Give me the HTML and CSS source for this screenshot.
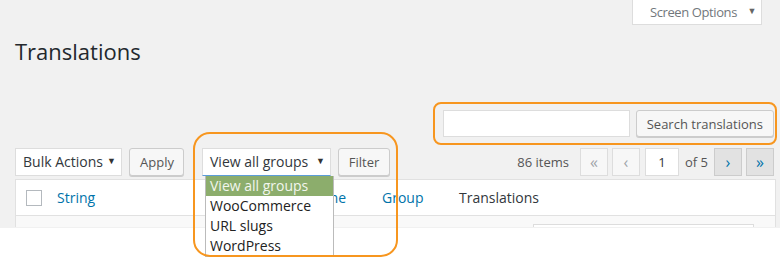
FILE: index.html
```html
<!DOCTYPE html>
<html>
    <head>
        <title>Translations</title>
        <meta charset="utf-8">
        <link rel="stylesheet" href="styles.css">
    </head>
    <body>
        <div class="wrap">
            <div class="screen_meta">
                <div class="screen_tab">Screen Options<span class="tri">&#9660;</span></div>
            </div>

            <h1 class="page_title">Translations</h1>

            <div class="search_row">
                <div class="search_box">
                    <input type="text" class="search_input">
                    <button type="button" class="btn">Search translations</button>
                </div>
            </div>

            <div class="tablenav">
                <div class="actions">
                    <div class="select bulk">Bulk Actions <span class="tri">&#9660;</span></div>
                    <button type="button" class="btn apply">Apply</button>
                    <div class="filter_group">
                        <div class="select groups">View all groups <span class="tri">&#9660;</span></div>
                        <button type="button" class="btn filter">Filter</button>
                        <ul class="dropdown">
                            <li class="picked">View all groups</li>
                            <li>WooCommerce</li>
                            <li>URL slugs</li>
                            <li>WordPress</li>
                        </ul>
                        <div class="highlight"></div>
                    </div>
                </div>
                <div class="pages">
                    <span class="count">86 items</span>
                    <span class="pbtn off">&laquo;</span>
                    <span class="pbtn off">&lsaquo;</span>
                    <span class="pnum">1</span>
                    <span class="of">of 5</span>
                    <span class="pbtn on">&rsaquo;</span>
                    <span class="pbtn on">&raquo;</span>
                </div>
            </div>

            <div class="list_table">
                <div class="head_row">
                    <span class="check"></span>
                    <span class="col col_string">String</span>
                    <span class="col col_name">Name</span>
                    <span class="col col_group">Group</span>
                    <span class="col col_trans">Translations</span>
                </div>
                <div class="body_row">
                    <div class="cell_box"></div>
                </div>
            </div>
        </div>
    </body>
</html>
```

FILE: styles.css
```css
html {
    height: 100%;
}
body {
    margin: 0;
    min-height: 100%;
    background-color: #fff;
    font-family: "Open Sans", "Liberation Sans", sans-serif;
    font-size: 13px;
    color: #444;
}
.wrap {
    background-color: #f1f1f1;
    height: 228px;
    padding: 0 6px 0 15px;
}
.screen_meta {
    display: flex;
    justify-content: flex-end;
    padding-right: 12px;
}
.screen_tab {
    width: 106px;
    height: 24px;
    line-height: 24px;
    padding: 0 5px 0 17px;
    display: flex;
    justify-content: space-between;
    background-color: #fff;
    border: 1px solid #ddd;
    border-top: none;
    color: #72777c;
    font-size: 13px;
    letter-spacing: -0.4px;
}
.screen_tab .tri {
    font-size: 9px;
    position: relative;
    top: -1px;
    color: #666;
}
.page_title {
    margin: 12px 0 0 0;
    font-size: 22px;
    font-weight: 400;
    line-height: 29px;
    color: #23282d;
}
.search_row {
    display: flex;
    justify-content: flex-end;
    margin: 36px -3px 0 0;
}
.search_box {
    display: flex;
    gap: 6px;
    border: 2px solid #f7961f;
    border-radius: 8px;
    padding: 6px 1px 6px 8px;
}
.search_input {
    width: 187px;
    height: 27px;
    box-sizing: border-box;
    border: 1px solid #ddd;
    background: #fff;
    margin: 0;
}
.btn {
    font-family: "Open Sans", "Liberation Sans", sans-serif;
    font-size: 13px;
    color: #555;
    background-color: #f7f7f7;
    border: 1px solid #ccc;
    border-radius: 3px;
    box-shadow: 0 1px 0 #ccc;
    height: 27px;
    padding: 0 10px;
    margin: 0;
}
.tablenav {
    display: flex;
    justify-content: space-between;
    margin-top: 3px;
}
.actions {
    display: flex;
    gap: 7px;
}
.select {
    height: 28px;
    box-sizing: border-box;
    border: 1px solid #ddd;
    background-color: #fff;
    color: #32373c;
    font-size: 14px;
    line-height: 26px;
    padding: 0 5px 0 7px;
    display: flex;
    justify-content: space-between;
}
.select .tri {
    font-size: 9px;
    color: #333;
    position: relative;
    top: -1px;
}
.bulk {
    width: 107px;
}
.apply {
    width: 55px;
    height: 28px;
}
.filter_group {
    position: relative;
    display: flex;
    gap: 7px;
    margin-left: 11px;
}
.groups {
    width: 129px;
    border-bottom-color: #5b9dd9;
}
.filter {
    width: 52px;
    height: 28px;
    padding: 0;
}
.dropdown {
    position: absolute;
    left: 3px;
    top: 28px;
    width: 127px;
    margin: 0;
    padding: 0;
    list-style: none;
    background-color: #fff;
    border: 1px solid #bbb;
    border-top: none;
    z-index: 3;
}
.dropdown li {
    height: 20px;
    line-height: 20px;
    padding-left: 4px;
    font-size: 14px;
    color: #222;
}
.dropdown .picked {
    background-color: #8cad6c;
    color: #f2f6ee;
}
.highlight {
    position: absolute;
    left: -9px;
    top: -16px;
    width: 201px;
    height: 121px;
    border: 2px solid #f7961f;
    border-radius: 17px;
    z-index: 4;
    pointer-events: none;
}
.pages {
    display: flex;
    align-items: center;
    gap: 4px;
}
.count {
    color: #555;
    margin-right: 7px;
}
.pbtn {
    width: 26px;
    height: 26px;
    box-sizing: content-box;
    display: flex;
    align-items: center;
    justify-content: center;
    font-size: 16px;
    border: 1px solid #ddd;
}
.off {
    background-color: #f7f7f7;
    color: #a0a5aa;
}
.on {
    background-color: #e2e2e2;
    border-color: #ccc;
    color: #0073aa;
}
.pnum {
    width: 32px;
    height: 26px;
    border: 1px solid #ddd;
    background: #fff;
    display: flex;
    align-items: center;
    justify-content: center;
    color: #32373c;
    margin-left: 1px;
}
.of {
    margin: 0 2px;
    color: #555;
}
.list_table {
    margin-top: 3px;
    width: 759px;
    border: 1px solid #e1e1e1;
    border-bottom: none;
    background-color: #fff;
}
.head_row {
    height: 35px;
    display: flex;
    align-items: center;
    border-bottom: 1px solid #e1e1e1;
    font-size: 14px;
}
.check {
    width: 14px;
    height: 14px;
    border: 1px solid #b4b9be;
    margin-left: 10px;
    margin-right: 15px;
}
.col {
    color: #0073aa;
}
.col_string {
    width: 250px;
}
.col_name {
    width: 75px;
}
.col_group {
    width: 77px;
}
.col_trans {
    color: #32373c;
}
.body_row {
    height: 11px;
    background-color: #f9f9f9;
    padding-left: 517px;
    display: flex;
    align-items: flex-end;
}
.cell_box {
    width: 219px;
    height: 2px;
    border: 1px solid #ddd;
    border-bottom: none;
    background: #fff;
}
```
